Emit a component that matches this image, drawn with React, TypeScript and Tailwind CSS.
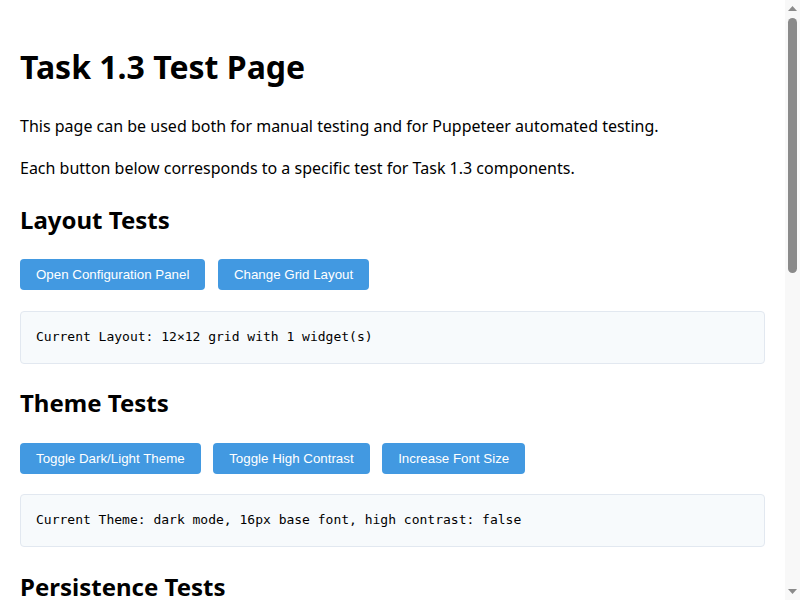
const sections = [
  {
    title: "Layout Tests",
    buttons: ["Open Configuration Panel", "Change Grid Layout"],
    status: "Current Layout: 12×12 grid with 1 widget(s)",
  },
  {
    title: "Theme Tests",
    buttons: ["Toggle Dark/Light Theme", "Toggle High Contrast", "Increase Font Size"],
    status: "Current Theme: dark mode, 16px base font, high contrast: false",
  },
  {
    title: "Persistence Tests",
    buttons: ["Save Configuration", "Load Configuration", "Reset to Defaults"],
    status: "Last Saved: never",
  },
  {
    title: "Widget Tests",
    buttons: ["Add Widget", "Remove Widget", "Resize Widget"],
    status: "Widgets: 1 active",
  },
];

function TestSection({ title, buttons, status }: { title: string; buttons: string[]; status: string }) {
  return (
    <section>
      <h2 className="text-2xl font-bold leading-[1.6] mt-[19.92px] mb-[19.92px]">{title}</h2>
      <div className="flex gap-[12.5px]">
        {buttons.map((b) => (
          <button
            key={b}
            className="bg-[#4299e1] text-white rounded px-4 py-2 text-[13.33px] leading-[15px] font-['Liberation_Sans',Arial,sans-serif]"
          >
            {b}
          </button>
        ))}
      </div>
      <div className="mt-[20.5px] mb-[20.6px] bg-[#f7fafc] border border-[#e2e8f0] rounded p-[15px] font-['DejaVu_Sans_Mono',monospace] text-[13px] leading-[1.6]">
        {status}
      </div>
    </section>
  );
}

// fake window scrollbar, drawn since the headless browser hides it
function Scrollbar() {
  return (
    <div className="w-[15px] h-[600px] shrink-0 bg-[#f8f8f8] flex flex-col items-center">
      <svg className="mt-[6px] shrink-0" width="9" height="5" viewBox="0 0 9 5">
        <path d="M4.5 0L9 5H0z" fill="#8a8a8a" />
      </svg>
      <div className="mt-[7px] w-[9.5px] h-[255px] rounded-full bg-[#8a8a8a]" />
      <div className="flex-1" />
      <svg className="mb-[6px] shrink-0" width="9" height="5" viewBox="0 0 9 5">
        <path d="M0 0H9L4.5 5z" fill="#8a8a8a" />
      </svg>
    </div>
  );
}

export default function App() {
  return (
    <div className="flex h-[600px] w-[800px] overflow-hidden bg-white">
      <main className="flex-1 h-[600px] overflow-hidden px-5 pt-5 text-black leading-[1.6] font-['Noto_Sans',sans-serif]">
        <h1 className="text-[32px] font-bold leading-[1.6] mt-[21.44px] mb-[21.44px]">Task 1.3 Test Page</h1>
        <p className="mb-4">This page can be used both for manual testing and for Puppeteer automated testing.</p>
        <p className="mb-4">Each button below corresponds to a specific test for Task 1.3 components.</p>
        {sections.map((s) => (
          <TestSection key={s.title} {...s} />
        ))}
      </main>
      <Scrollbar />
    </div>
  );
}
